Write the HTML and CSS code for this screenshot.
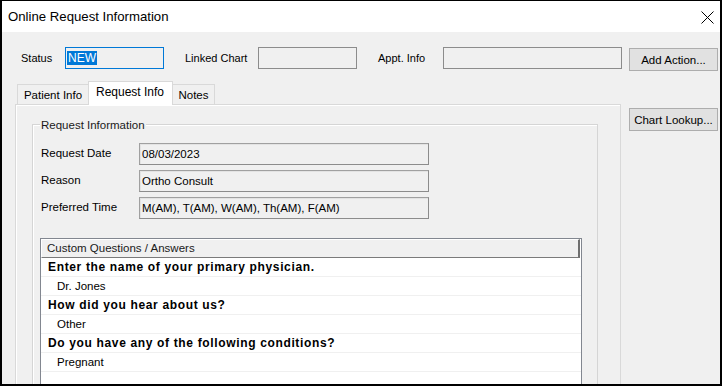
FILE: index.html
```html
<!DOCTYPE html>
<html>
<head>
    <title>Online Request Information</title>
    <link rel="stylesheet" href="styles.css">
</head>
<body>
    <div class="window">
        <!-- title bar -->
        <div class="titlebar">
            <span class="title">Online Request Information</span>
            <svg class="close" width="13" height="13" viewBox="0 0 13 13">
                <path d="M0.5 0.5 L12.5 12.5 M12.5 0.5 L0.5 12.5" stroke="#000" stroke-width="1" fill="none"/>
            </svg>
        </div>
        <div class="client">
            <!-- status row -->
            <div class="toprow">
                <span class="lbl lbl-status">Status</span>
                <div class="field field-status focused"><span class="sel">NEW</span></div>
                <span class="lbl lbl-linked">Linked Chart</span>
                <div class="field field-linked"></div>
                <span class="lbl lbl-appt">Appt. Info</span>
                <div class="field field-appt"></div>
                <button class="btn">Add Action...</button>
            </div>
            <div class="main">
                <!-- tab control -->
                <div class="tabctl">
                    <div class="tabs">
                        <div class="tab tab-patient">Patient Info</div>
                        <div class="tab tab-request active">Request Info</div>
                        <div class="tab tab-notes">Notes</div>
                    </div>
                    <div class="tabpage">
                        <div class="group">
                            <span class="group-title">Request Information</span>
                            <div class="fields">
                                <div class="frow">
                                    <span class="flbl">Request Date</span>
                                    <div class="fval">08/03/2023</div>
                                </div>
                                <div class="frow">
                                    <span class="flbl">Reason</span>
                                    <div class="fval">Ortho Consult</div>
                                </div>
                                <div class="frow">
                                    <span class="flbl">Preferred Time</span>
                                    <div class="fval">M(AM), T(AM), W(AM), Th(AM), F(AM)</div>
                                </div>
                            </div>
                            <!-- questions list -->
                            <div class="listview">
                                <div class="lv-header">Custom Questions / Answers</div>
                                <div class="lv-row q">Enter the name of your primary physician.</div>
                                <div class="lv-row a">Dr. Jones</div>
                                <div class="lv-row q">How did you hear about us?</div>
                                <div class="lv-row a">Other</div>
                                <div class="lv-row q">Do you have any of the following conditions?</div>
                                <div class="lv-row a">Pregnant</div>
                                <div class="lv-row a"></div>
                            </div>
                        </div>
                    </div>
                </div>
                <div class="side">
                    <button class="btn">Chart Lookup...</button>
                </div>
            </div>
        </div>
    </div>
</body>
</html>
```

FILE: styles.css
```css
html, body {
    margin: 0;
    padding: 0;
    background-color: #000;
}
body {
    font-family: "Liberation Sans", Arial, sans-serif;
    font-size: 11px;
    color: #000;
}
.window {
    width: 718px;
    height: 383px;
    border-top: 1px solid #000;
    border-left: 2px solid #000;
    border-right: 2px solid #000;
    border-bottom: 2px solid #000;
    background-color: #f0f0f0;
    overflow: hidden;
    display: flex;
    flex-direction: column;
}
.titlebar {
    height: 31px;
    flex: none;
    background-color: #fff;
    display: flex;
    align-items: center;
    padding-left: 6px;
    padding-right: 6px;
}
.title {
    font-size: 13.2px;
    flex: 1;
}
.close {
    margin-top: 1px;
}
.client {
    flex: 1;
    display: flex;
    flex-direction: column;
    min-height: 0;
}
.toprow {
    display: flex;
    align-items: flex-start;
    padding-top: 15px;
    height: 24px;
}
.lbl {
    line-height: 22px;
}
.lbl-status {
    margin-left: 19px;
    width: 44px;
}
.lbl-linked {
    margin-left: 21px;
    width: 73px;
}
.lbl-appt {
    margin-left: 21px;
    width: 65px;
}
.field {
    height: 20px;
    border: 1px solid #8c8c8c;
    background-color: #f0f0f0;
    box-sizing: content-box;
}
.field-status {
    width: 97px;
}
.field-linked {
    width: 97px;
}
.field-appt {
    width: 177px;
}
.focused {
    border-color: #0078d7;
}
.sel {
    display: inline-block;
    margin: 3px 0 0 1px;
    line-height: 14px;
    padding: 0 1px;
    background-color: #0078d7;
    color: #fff;
    font-size: 12px;
}
.btn {
    font-family: "Liberation Sans", Arial, sans-serif;
    font-size: 11.5px;
    color: #000;
    background-color: #e1e1e1;
    border: 1px solid #adadad;
    width: 89px;
    height: 23px;
    padding: 0;
    margin: 0;
}
.toprow .btn {
    margin-left: 7px;
    margin-top: 1px;
}
.main {
    flex: 1;
    display: flex;
    margin-top: 11px;
    min-height: 0;
}
.tabctl {
    margin-left: 13px;
    width: 606px;
    display: flex;
    flex-direction: column;
}
.tabs {
    height: 22px;
    display: flex;
    align-items: flex-end;
    padding-left: 2px;
    position: relative;
    z-index: 1;
}
.tab {
    height: 19px;
    line-height: 20px;
    border: 1px solid #d9d9d9;
    border-bottom: none;
    background-color: #f0f0f0;
    text-align: center;
    box-sizing: content-box;
    font-size: 11.5px;
}
.tab-patient {
    width: 70px;
}
.tab-request {
    width: 82px;
}
.tab-notes {
    width: 41px;
}
.tab.active {
    height: 23px;
    line-height: 20px;
    background-color: #fff;
    margin-bottom: -1px;
    margin-left: -1px;
    margin-right: -1px;
    position: relative;
    text-align: left;
    padding-left: 7px;
    width: 76px;
    font-size: 12px;
}
.tabpage {
    flex: 1;
    border: 1px solid #d9d9d9;
    background-color: #f0f0f0;
    box-shadow: inset 1px 1px #fff;
    padding: 19px 22px 0 16px;
}
.group {
    border: 1px solid #d5d5d5;
    box-shadow: inset 1px 1px #fff;
    border-bottom: none;
    height: 400px;
    padding-left: 8px;
}
.group-title {
    display: block;
    width: max-content;
    margin-top: -7px;
    margin-left: -1px;
    padding: 0 1px;
    height: 14px;
    line-height: 14px;
    font-size: 11.5px;
    background-color: #f0f0f0;
    color: #1a1a1a;
}
.fields {
    margin-top: 11px;
    display: flex;
    flex-direction: column;
    gap: 5px;
}
.frow {
    display: flex;
    height: 22px;
}
.flbl {
    width: 98px;
    line-height: 20px;
    font-size: 11.5px;
}
.fval {
    width: 286px;
    height: 20px;
    line-height: 20px;
    padding-left: 2px;
    border: 1px solid #a0a0a0;
    border-right-color: #8c8c8c;
    border-bottom-color: #8c8c8c;
    box-shadow: inset 1px 1px #e3e3e3;
    background-color: #f0f0f0;
    box-sizing: content-box;
    font-size: 11.5px;
}
.listview {
    margin-top: 19px;
    margin-left: -1px;
    width: 540px;
    border: 1px solid #828790;
    border-bottom: none;
    background-color: #fff;
    height: 200px;
}
.lv-header {
    height: 17px;
    line-height: 17px;
    margin-right: 1px;
    padding-left: 5px;
    background-color: #f0f0f0;
    border-top: 1px solid #fff;
    border-left: 1px solid #fff;
    border-right: 2px solid #6f6f6f;
    border-bottom: 1px solid #7a7a7a;
    font-size: 11.5px;
    color: #1a1a1a;
}
.lv-row {
    height: 18px;
    line-height: 18px;
    border-bottom: 1px solid #f0f0f0;
}
.lv-row.q {
    padding-left: 7px;
    font-weight: bold;
    font-size: 12px;
    letter-spacing: 0.65px;
}
.lv-row.a {
    padding-left: 16px;
    font-size: 11.5px;
}
.side {
    margin-left: 8px;
    padding-top: 26px;
}
```
